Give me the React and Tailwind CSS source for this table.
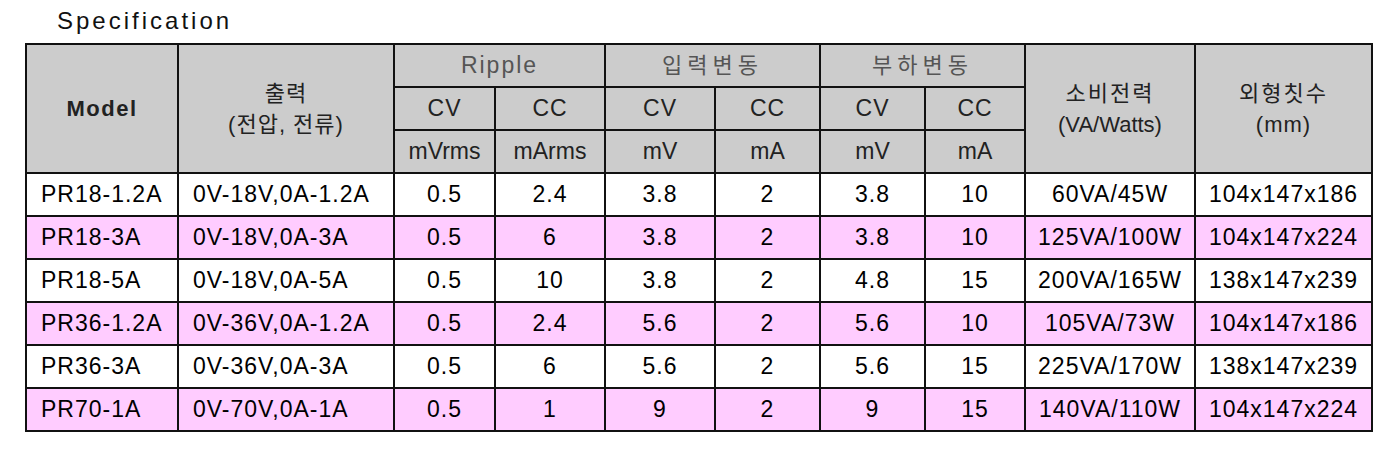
const rows = [
  ["PR18-1.2A", "0V-18V,0A-1.2A", "0.5", "2.4", "3.8", "2", "3.8", "10", "60VA/45W", "104x147x186"],
  ["PR18-3A", "0V-18V,0A-3A", "0.5", "6", "3.8", "2", "3.8", "10", "125VA/100W", "104x147x224"],
  ["PR18-5A", "0V-18V,0A-5A", "0.5", "10", "3.8", "2", "4.8", "15", "200VA/165W", "138x147x239"],
  ["PR36-1.2A", "0V-36V,0A-1.2A", "0.5", "2.4", "5.6", "2", "5.6", "10", "105VA/73W", "104x147x186"],
  ["PR36-3A", "0V-36V,0A-3A", "0.5", "6", "5.6", "2", "5.6", "15", "225VA/170W", "138x147x239"],
  ["PR70-1A", "0V-70V,0A-1A", "0.5", "1", "9", "2", "9", "15", "140VA/110W", "104x147x224"],
];

const cell = "border-r-2 border-b-2 border-[#111] flex items-center";
const head = `${cell} bg-[#cccccc] justify-center text-[#222]`;

export default function App() {
  return (
    <div
      className="bg-white min-h-[476px] pt-[7px] pl-[25px] text-black"
      style={{ fontFamily: '"Liberation Sans", "Noto Sans CJK KR", sans-serif' }}
    >
      <div className="pl-[32px] h-[36px] text-[24px] tracking-[3px] text-[#111] leading-[28px]">
        Specification
      </div>

      <div className="grid w-max grid-cols-[152px_216px_101px_110px_110px_105px_105px_100px_170px_177px] grid-rows-[43px_43px_43px] auto-rows-[43px] border-l-2 border-t-2 border-[#111] text-[23px] tracking-[1px]">
        <div className={`${head} row-span-3 font-bold text-[22px] tracking-[1.5px] text-[#111]`}>Model</div>
        <div className={`${head} row-span-3 flex-col leading-[31px] text-[22px]`}>
          <span>출력</span>
          <span>(전압, 전류)</span>
        </div>
        <div className={`${head} col-span-2 text-[#555] tracking-[2px]`}>Ripple</div>
        <div className={`${head} col-span-2 text-[#555] text-[22px] tracking-[5px]`}>입력변동</div>
        <div className={`${head} col-span-2 text-[#555] text-[22px] tracking-[5px]`}>부하변동</div>
        <div className={`${head} row-span-3 flex-col leading-[31px] text-[22px]`}>
          <span className="tracking-[2px]">소비전력</span>
          <span className="tracking-normal">(VA/Watts)</span>
        </div>
        <div className={`${head} row-span-3 flex-col leading-[31px] text-[22px]`}>
          <span className="tracking-[2px]">외형칫수</span>
          <span>(mm)</span>
        </div>

        {["CV", "CC", "CV", "CC", "CV", "CC"].map((t, i) => (
          <div key={"a" + i} className={head}>
            {t}
          </div>
        ))}
        {["mVrms", "mArms", "mV", "mA", "mV", "mA"].map((t, i) => (
          <div key={"b" + i} className={`${head} tracking-normal`}>
            {t}
          </div>
        ))}

        {rows.map((r, ri) => {
          const bg = ri % 2 === 1 ? "bg-[#ffccff]" : "bg-white";
          return r.map((v, ci) => (
            <div
              key={ri + "-" + ci}
              className={`${cell} ${bg} ${ci < 2 ? "justify-start pl-[14px]" : "justify-center"}`}
            >
              {v}
            </div>
          ));
        })}
      </div>
    </div>
  );
}
